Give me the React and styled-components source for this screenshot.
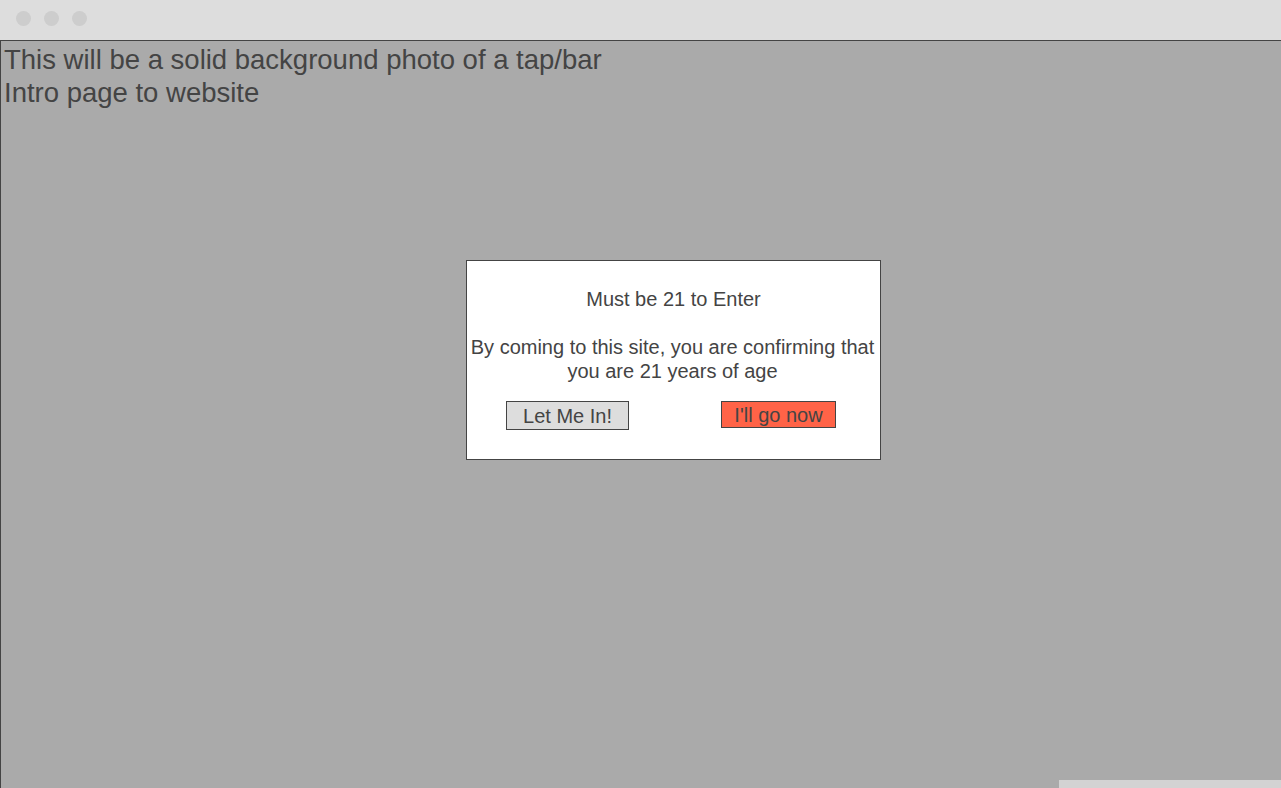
import React from 'react'
import styled, { createGlobalStyle } from 'styled-components'

const GlobalStyle = createGlobalStyle`
  html, body {
    margin: 0;
    padding: 0;
    height: 100%;
    background: #aaaaaa;
    font-family: "Liberation Sans", Arial, sans-serif;
    color: #444;
  }
  #root {
    height: 100%;
  }
`

const Window = styled.div`
  display: flex;
  flex-direction: column;
  height: 788px;
  overflow: hidden;
`

const TitleBar = styled.div`
  height: 40px;
  flex: none;
  background: #dddddd;
  display: flex;
  align-items: center;
  gap: 13px;
  padding-left: 16px;
  box-sizing: border-box;
`

const Dot = styled.span`
  width: 15px;
  height: 15px;
  border-radius: 50%;
  background: #cdcdcd;
  margin-top: -4px;
`

const Page = styled.div`
  flex: 1;
  display: flex;
  flex-direction: column;
  border-top: 1px solid #444;
  border-left: 1px solid #444;
  background: #aaaaaa;
  padding-left: 3px;
`

const Intro = styled.p`
  margin: 0;
  font-size: 27.5px;
  line-height: 33px;
  padding-top: 2px;
`

const Modal = styled.div`
  width: 415px;
  height: 200px;
  box-sizing: border-box;
  margin: 151px 0 0 462px;
  background: #fff;
  border: 1px solid #444;
  text-align: center;
  font-size: 20px;
  padding-top: 26px;
`

const Heading = styled.div`
  line-height: 24px;
`

const Message = styled.p`
  margin: 24px 3px 0 1px;
  line-height: 24px;
`

const Actions = styled.div`
  display: flex;
  align-items: flex-start;
  gap: 92px;
  padding-left: 39px;
  margin-top: 18px;
`

const Button = styled.button`
  font-family: "Liberation Sans", Arial, sans-serif;
  font-size: 20px;
  color: #444;
  border: 1px solid #444;
  border-radius: 0;
  padding: 0;
  box-sizing: border-box;
  width: ${p => p.$w}px;
  height: ${p => p.$h}px;
  background: ${p => (p.$danger ? '#ff6347' : '#dddddd')};
  line-height: 1;
`

const Spacer = styled.div`
  flex: 1;
`

const BottomBar = styled.div`
  align-self: flex-end;
  width: 222px;
  height: 8px;
  background: #d3d3d3;
`

export default function App() {
  return (
    <>
      <GlobalStyle />
      <Window>
        <TitleBar>
          <Dot />
          <Dot />
          <Dot />
        </TitleBar>
        <Page>
          <Intro>
            This will be a solid background photo of a tap/bar
            <br />
            Intro page to website
          </Intro>
          <Modal>
            <Heading>Must be 21 to Enter</Heading>
            <Message>
              By coming to this site, you are confirming that you are 21 years of age
            </Message>
            <Actions>
              <Button $w={123} $h={29}>Let Me In!</Button>
              <Button $w={115} $h={27} $danger>I'll go now</Button>
            </Actions>
          </Modal>
          <Spacer />
          <BottomBar />
        </Page>
      </Window>
    </>
  )
}
